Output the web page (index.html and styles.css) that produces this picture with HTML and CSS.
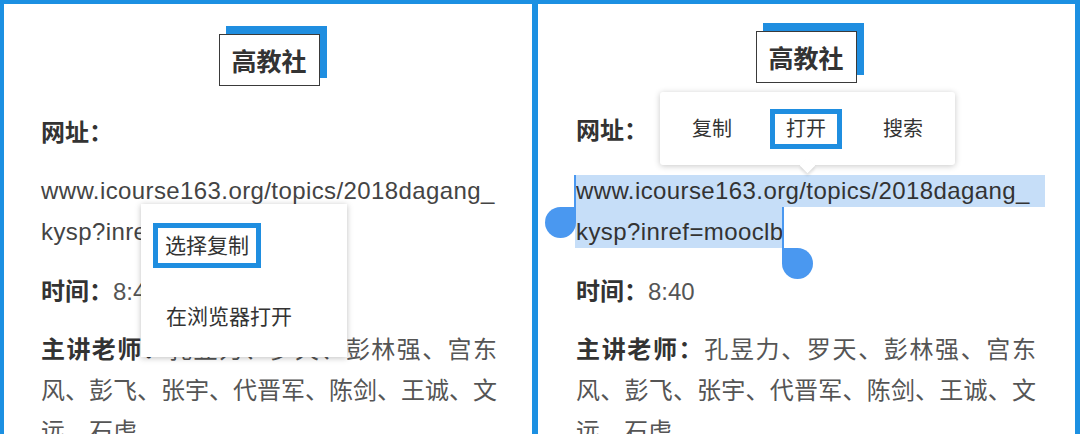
FILE: index.html
```html
<!DOCTYPE html>
<html lang="zh-CN">
<head>
    <meta charset="UTF-8">
    <meta name="viewport" content="width=device-width, initial-scale=1.0">
    <title>高教社 - 链接操作</title>
    <link rel="stylesheet" href="styles.css">
</head>
<body>
    <div class="screen">
        <!-- left: long press menu -->
        <section class="panel">
            <div class="content content-left">
                <div class="logo"><span>高教社</span></div>
                <p class="label">网址：</p>
                <div class="url">
                    <div class="url-line first">www.icourse163.org/topics/2018dagang_</div>
                    <div class="url-line second">kysp?inref=mooclb</div>
                </div>
                <p class="row time"><b>时间：</b>8:40</p>
                <p class="row teachers"><b>主讲老师：</b>孔昱力、罗天、彭林强、宫东风、彭飞、张宇、代晋军、陈剑、王诚、文远、石虎</p>
            </div>

            <ul class="menu">
                <li class="menu-item active">选择复制</li>
                <li class="menu-item">在浏览器打开</li>
            </ul>
        </section>

        <!-- right: text selected -->
        <section class="panel">
            <div class="content content-right">
                <div class="logo"><span>高教社</span></div>
                <p class="label">网址：</p>
                <div class="url selected">
                    <div class="url-line first">www.icourse163.org/topics/2018dagang_</div>
                    <div class="url-line second"><span class="sel">kysp?inref=mooclb</span></div>
                </div>
                <p class="row time"><b>时间：</b>8:40</p>
                <p class="row teachers"><b>主讲老师：</b>孔昱力、罗天、彭林强、宫东风、彭飞、张宇、代晋军、陈剑、王诚、文远、石虎</p>
            </div>

            <div class="toolbar">
                <span class="tool">复制</span>
                <span class="tool active">打开</span>
                <span class="tool">搜索</span>
            </div>

            <span class="handle handle-start"></span>
            <span class="handle handle-end"></span>
        </section>
    </div>
</body>
</html>
```

FILE: styles.css
```css
html, body {
    margin: 0;
    padding: 0;
}

body {
    width: 1080px;
    height: 434px;
    overflow: hidden;
    background-color: #1c90e2;
    font-family: "Liberation Sans", "Noto Sans CJK SC", sans-serif;
    color: #555;
}

.screen {
    display: grid;
    grid-template-columns: 528px 537px;
    column-gap: 6px;
    padding: 4px 0 0 4px;
}

.panel {
    position: relative;
    height: 430px;
    background-color: #fff;
    overflow: hidden;
}

.content {
    padding-top: 30px;
}

.content-left {
    padding-left: 37px;
    width: 456px;
}

.content-right {
    padding-top: 27px;
    padding-left: 38px;
    width: 460px;
}

/* logo */
.logo {
    position: relative;
    width: 101px;
    height: 52px;
    margin: 0 auto;
}

.logo::before {
    content: "";
    position: absolute;
    left: 7px;
    top: -8px;
    width: 101px;
    height: 52px;
    background-color: #1f8ee0;
}

.logo span {
    position: relative;
    display: flex;
    align-items: center;
    justify-content: center;
    height: 100%;
    box-sizing: border-box;
    border: 1.5px solid #3a3a3a;
    background-color: #fff;
    font-size: 25px;
    font-weight: bold;
    color: #333;
}

/* text rows */
.label,
.row {
    margin: 0;
    font-size: 24px;
    line-height: 41px;
}

.label {
    margin-top: 26px;
    font-weight: bold;
    color: #333;
}

.content-right .label {
    margin-top: 27px;
}

.row b {
    color: #333;
}

.url {
    margin-top: 22px;
    font-size: 24px;
    letter-spacing: 0.4px;
    color: #444;
}

.content-right .url {
    margin-top: 24px;
}

.url-line.first {
    height: 32px;
    line-height: 32px;
}

.url-line.second {
    height: 41px;
    padding-top: 8px;
    line-height: 33px;
    box-sizing: border-box;
}

.url.selected .url-line.first {
    margin: 0 -9px 0 -1px;
    padding-left: 1px;
    background-color: #c6def8;
    color: #333;
}

.url.selected .sel {
    display: inline-block;
    margin-left: -1px;
    padding-left: 1px;
    height: 41px;
    margin-top: -8px;
    padding-top: 8px;
    box-sizing: border-box;
    background-color: #c6def8;
    color: #333;
    vertical-align: top;
}

.time {
    margin-top: 23px;
}

.teachers {
    margin-top: 17px;
    text-align: justify;
}

/* left long-press menu */
.menu {
    position: absolute;
    left: 137px;
    top: 200px;
    width: 206px;
    height: 153px;
    box-sizing: border-box;
    margin: 0;
    padding: 19px 0 0 12px;
    list-style: none;
    background-color: #fff;
    box-shadow: 0 1px 6px rgba(0, 0, 0, 0.25);
}

.menu-item {
    display: inline-block;
    padding: 5px 12px 5px 8px;
    border: 5px solid transparent;
    font-size: 21px;
    line-height: 25px;
    color: #333;
}

.menu-item + .menu-item {
    display: block;
    margin-top: 26px;
}

.menu-item.active {
    padding: 5px 7px;
    border-color: #1f8ee0;
}

/* right selection toolbar */
.toolbar {
    position: absolute;
    left: 122px;
    top: 88px;
    width: 295px;
    height: 73px;
    box-sizing: border-box;
    display: flex;
    align-items: center;
    gap: 38px;
    padding: 0 0 0 32px;
    background-color: #fff;
    border-radius: 3px;
    box-shadow: 0 1px 6px rgba(0, 0, 0, 0.22);
}

.toolbar::after {
    content: "";
    position: absolute;
    left: 142px;
    bottom: -6px;
    width: 11px;
    height: 11px;
    background-color: #fff;
    transform: rotate(45deg);
    box-shadow: 2px 2px 3px rgba(0, 0, 0, 0.12);
}

.tool {
    font-size: 20px;
    line-height: 24px;
    color: #333;
}

.tool.active {
    padding: 3px 11px 3px 11px;
    border: 5px solid #1f8ee0;
    margin-right: 3px;
}

/* selection handles */
.handle {
    position: absolute;
    width: 31px;
    height: 31px;
    background-color: #4a98f0;
}

.handle::before {
    content: "";
    position: absolute;
    bottom: 100%;
    width: 2px;
    background-color: #4a98f0;
}

.handle-start {
    left: 7px;
    top: 203px;
    border-radius: 50% 0 50% 50%;
}

.handle-start::before {
    right: 0;
    height: 32px;
}

.handle-end {
    left: 244px;
    top: 244px;
    border-radius: 0 50% 50% 50%;
}

.handle-end::before {
    left: 0;
    height: 41px;
}
```
